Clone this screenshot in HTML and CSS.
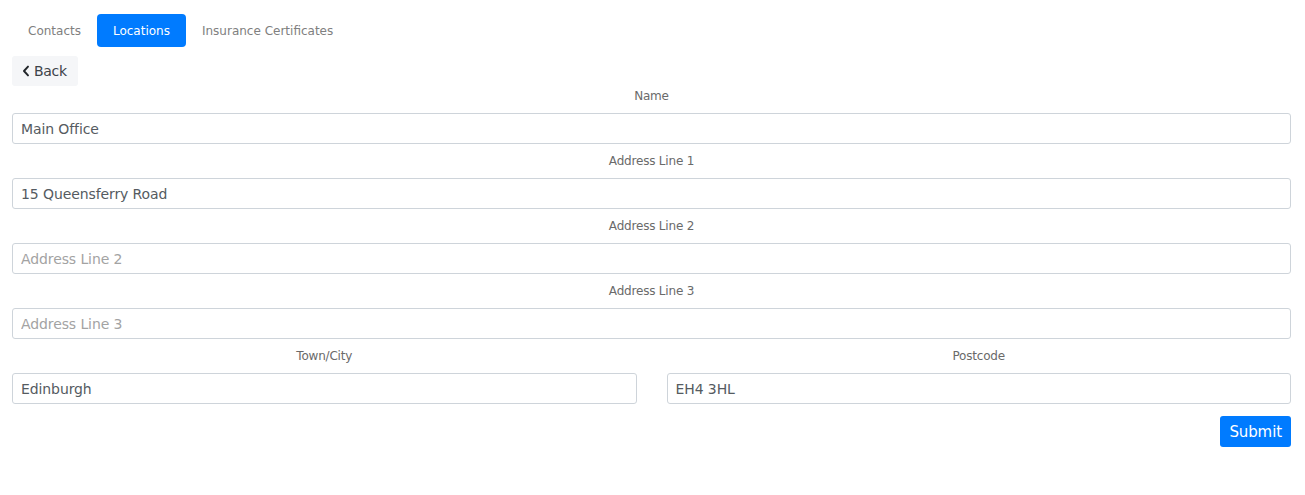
FILE: index.html
```html
<!DOCTYPE html>
<html lang="en">
<head>
<meta charset="utf-8">
<title>Locations</title>
<link rel="stylesheet" href="styles.css">
</head>
<body>
<div class="page">
  <nav class="tabs">
    <a class="tab">Contacts</a>
    <a class="tab active">Locations</a>
    <a class="tab">Insurance Certificates</a>
  </nav>
  <div class="back-row">
    <button class="back"><svg class="chev" viewBox="0 0 10 14" width="8" height="12"><path d="M7.5 1.5 L2.5 7 L7.5 12.5" fill="none" stroke="currentColor" stroke-width="2.4" stroke-linecap="round" stroke-linejoin="round"/></svg>Back</button>
  </div>
  <form class="form">
    <div class="field">
      <label class="label">Name</label>
      <input class="input" type="text" value="Main Office">
    </div>
    <div class="field">
      <label class="label">Address Line 1</label>
      <input class="input" type="text" value="15 Queensferry Road">
    </div>
    <div class="field">
      <label class="label">Address Line 2</label>
      <input class="input" type="text" placeholder="Address Line 2">
    </div>
    <div class="field">
      <label class="label">Address Line 3</label>
      <input class="input" type="text" placeholder="Address Line 3">
    </div>
    <div class="row">
      <div class="field">
        <label class="label">Town/City</label>
        <input class="input" type="text" value="Edinburgh">
      </div>
      <div class="field">
        <label class="label">Postcode</label>
        <input class="input" type="text" value="EH4 3HL">
      </div>
    </div>
    <div class="actions">
      <button class="submit" type="button">Submit</button>
    </div>
  </form>
</div>
</body>
</html>
```
FILE: styles.css
```css
* { box-sizing: border-box; }
body {
  margin: 0;
  font-family: "DejaVu Sans", "Open Sans", sans-serif;
  color: #495057;
  background: #fff;
}
.page {
  padding: 14px 14px 0 12px;
}
.tabs {
  display: flex;
  height: 33px;
}
.tab {
  display: flex;
  align-items: center;
  padding: 0 16px;
  font-size: 12px;
  color: #808080;
  border-radius: 4px;
}
.tab.active {
  background: #007bff;
  color: #fff;
}
.back-row {
  margin-top: 9px;
}
.back {
  display: inline-flex;
  align-items: center;
  gap: 4px;
  height: 30px;
  padding: 0 11px 0 10px;
  border: 0;
  border-radius: 3px;
  background: #f5f6f8;
  color: #3d4349;
  font-family: inherit;
  font-size: 14px;
  letter-spacing: -0.3px;
}
.chev { color: #212529; }
.form {
  display: flex;
  flex-direction: column;
  gap: 8px;
  margin-top: 1px;
}
.field {
  display: flex;
  flex-direction: column;
}
.label {
  text-align: center;
  font-size: 12px;
  line-height: 18px;
  margin-bottom: 8px;
  color: #6a6a6a;
  letter-spacing: -0.2px;
}
.input {
  height: 31px;
  width: 100%;
  border: 1px solid #ced4da;
  border-radius: 3px;
  padding: 0 8px;
  font-family: inherit;
  font-size: 14px;
  color: #555b61;
  letter-spacing: -0.1px;
}
.input::placeholder { color: #a3a3a3; }
.row {
  display: grid;
  grid-template-columns: 1fr 1fr;
  gap: 30px;
}
.actions {
  display: flex;
  justify-content: flex-end;
  margin-top: 4px;
}
.submit {
  height: 31px;
  padding: 0 9px;
  border: 0;
  border-radius: 3px;
  background: #007bff;
  color: #fff;
  font-family: inherit;
  font-size: 15px;
  letter-spacing: -0.1px;
}
```
